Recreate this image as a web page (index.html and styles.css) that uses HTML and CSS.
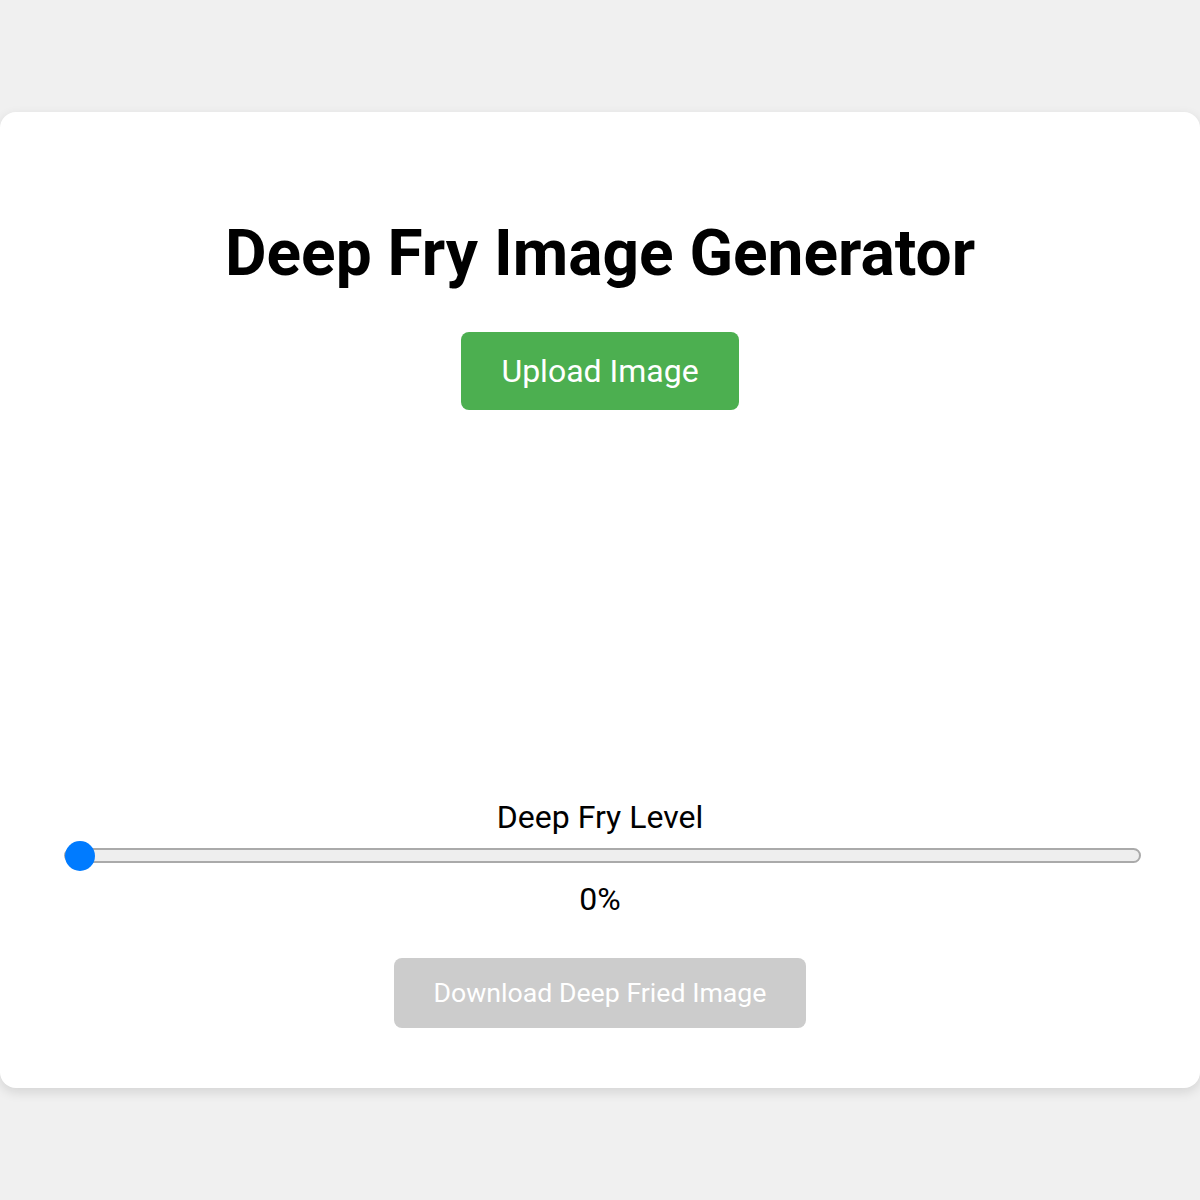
FILE: index.html
```html
<!DOCTYPE html>
<html>
<head>
<meta charset="utf-8">
<link rel="stylesheet" href="styles.css">
</head>
<body>
<div class="card">
  <h1 class="title">Deep Fry Image Generator</h1>
  <button class="upload">Upload Image</button>
  <div class="preview"></div>
  <div class="control">
    <label class="label">Deep Fry Level</label>
    <input class="slider" type="range" min="0" max="100" value="0">
    <div class="value">0%</div>
  </div>
  <button class="download" disabled>Download Deep Fried Image</button>
</div>
</body>
</html>
```
FILE: styles.css
```css
html, body {
  margin: 0;
  padding: 0;
  background: #f0f0f0;
  font-family: Roboto, "Liberation Sans", sans-serif;
}
body {
  padding-top: 112px;
  height: 1200px;
  box-sizing: border-box;
}
.card {
  background: #fff;
  border-radius: 16px;
  box-shadow: 0 4px 12px rgba(0,0,0,0.12);
  padding: 60px 60px 60px;
  display: flex;
  flex-direction: column;
  align-items: center;
  box-sizing: border-box;
  width: 1200px;
}
.title {
  font-size: 64px;
  font-weight: 700;
  margin: 44px 0 41px;
  color: #000;
}
.upload {
  background: #4caf50;
  color: #fff;
  border: none;
  border-radius: 8px;
  font-family: inherit;
  font-size: 32px;
  padding: 20px 40px;
  height: 78px;
}
.preview {
  height: 388px;
}
.control {
  width: 100%;
  display: flex;
  flex-direction: column;
  align-items: center;
}
.label {
  font-size: 32px;
  color: #000;
}
.slider {
  -webkit-appearance: none;
  appearance: none;
  align-self: flex-start;
  width: 1077px;
  height: 15px;
  background: #eee;
  border: 2px solid #aaa;
  border-radius: 8px;
  margin: 12px 0 17px 4px;
  padding: 0;
  box-sizing: border-box;
}
.slider::-webkit-slider-thumb {
  -webkit-appearance: none;
  width: 30px;
  height: 30px;
  margin-left: -1px;
  border-radius: 50%;
  background: #007bff;
  border: none;
}
.value {
  font-size: 32px;
  color: #000;
}
.download {
  margin-top: 40px;
  background: #ccc;
  color: #fff;
  border: none;
  border-radius: 8px;
  font-family: inherit;
  font-size: 26.7px;
  padding: 19px 40px;
  height: 70px;
}
```
